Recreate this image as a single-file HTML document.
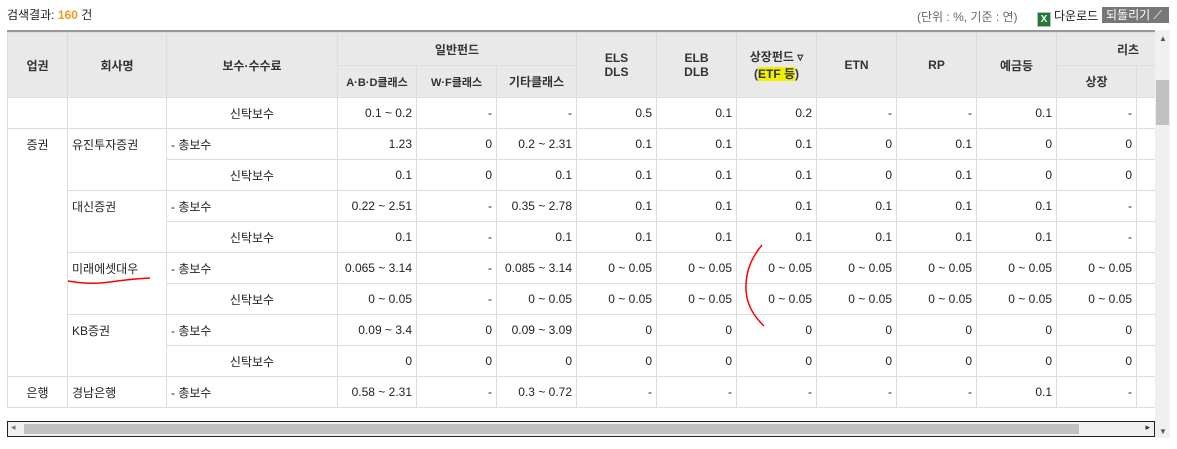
<!DOCTYPE html>
<html><head><meta charset="utf-8"><style>
body{margin:0;width:1177px;height:449px;background:#fff;font-family:"Liberation Sans","Noto Sans CJK KR",sans-serif;font-size:12px;color:#222;position:relative;overflow:hidden}
.top{position:absolute;left:7px;top:6px;font-size:12px}
.top b{color:#f39a1e;font-weight:bold}
.unit{position:absolute;left:917px;top:8px;color:#666;font-size:12px;white-space:nowrap}
.dl{position:absolute;left:1037px;top:7px;font-size:12px;white-space:nowrap}
.xl{display:inline-block;width:12px;height:13px;background:#1f7a3a;color:#fff;font-size:10px;font-weight:bold;text-align:center;line-height:13px;vertical-align:-2px;margin-right:3px;border:1px solid #bbb}
.btn{position:absolute;left:1102px;top:7px;width:67px;height:16px;background:#777;color:#fff;font-size:12px;line-height:16px;padding-left:4px;box-sizing:border-box;white-space:nowrap}
.wrap{position:absolute;left:7px;top:30px;width:1148px;height:377px;overflow:hidden;border-top:2px solid #999}
table{border-collapse:collapse;table-layout:fixed;width:1192px}
td,th{border:1px solid #ddd;height:30px;padding:0 4px;white-space:nowrap;overflow:hidden}
th{background:#e9e9e9;font-weight:bold;color:#333;font-size:12px}
td{text-align:right}
td.c{text-align:center}td.l{text-align:left}
.vs{position:absolute;left:1155px;top:30px;width:15px;height:408px;background:#f0f0f0}
.hs{position:absolute;left:7px;top:421px;width:1148px;height:16px;border:1px solid #222;background:#f0f0f0;box-sizing:border-box}
</style></head><body>
<div class="top">검색결과: <b>160</b> 건</div>
<div class="unit">(단위 : %, 기준 : 연)</div>
<div class="dl"><span class="xl">X</span>다운로드</div>
<div class="btn">되돌리기 ⟋</div>
<div class="wrap"><table>
<colgroup><col style="width:60px"><col style="width:99px"><col style="width:171px"><col style="width:79px"><col style="width:80px"><col style="width:80px"><col style="width:80px"><col style="width:80px"><col style="width:80px"><col style="width:80px"><col style="width:80px"><col style="width:80px"><col style="width:80px"><col style="width:63px"></colgroup>
<tr><th rowspan="2" style="height:64px">업권</th><th rowspan="2">회사명</th><th rowspan="2">보수·수수료</th><th colspan="3" style="height:31px">일반펀드</th><th rowspan="2">ELS<br>DLS</th><th rowspan="2">ELB<br>DLB</th><th rowspan="2">상장펀드 ▿<br>(<span style="background:#f0f000">ETF 등</span>)</th><th rowspan="2">ETN</th><th rowspan="2">RP</th><th rowspan="2">예금등</th><th colspan="2" style="text-align:left;padding-left:60px">리츠</th></tr>
<tr><th style="font-size:11px;padding:0">A·B·D클래스</th><th style="font-size:11px;padding:0">W·F클래스</th><th>기타클래스</th><th>상장</th><th></th></tr>
<tr><td></td><td></td><td class="c">신탁보수</td><td>0.1 ~ 0.2</td><td>-</td><td>-</td><td>0.5</td><td>0.1</td><td>0.2</td><td>-</td><td>-</td><td>0.1</td><td>-</td><td></td></tr>
<tr><td class="c" rowspan="8" style="vertical-align:top;padding-top:7px">증권</td><td class="l" rowspan="2" style="vertical-align:top;padding-top:7px">유진투자증권</td><td class="l">- 총보수</td><td>1.23</td><td>0</td><td>0.2 ~ 2.31</td><td>0.1</td><td>0.1</td><td>0.1</td><td>0</td><td>0.1</td><td>0</td><td>0</td><td></td></tr>
<tr><td class="c">신탁보수</td><td>0.1</td><td>0</td><td>0.1</td><td>0.1</td><td>0.1</td><td>0.1</td><td>0</td><td>0.1</td><td>0</td><td>0</td><td></td></tr>
<tr><td class="l" rowspan="2" style="vertical-align:top;padding-top:7px">대신증권</td><td class="l">- 총보수</td><td>0.22 ~ 2.51</td><td>-</td><td>0.35 ~ 2.78</td><td>0.1</td><td>0.1</td><td>0.1</td><td>0.1</td><td>0.1</td><td>0.1</td><td>-</td><td></td></tr>
<tr><td class="c">신탁보수</td><td>0.1</td><td>-</td><td>0.1</td><td>0.1</td><td>0.1</td><td>0.1</td><td>0.1</td><td>0.1</td><td>0.1</td><td>-</td><td></td></tr>
<tr><td class="l" rowspan="2" style="vertical-align:top;padding-top:7px">미래에셋대우</td><td class="l">- 총보수</td><td>0.065 ~ 3.14</td><td>-</td><td>0.085 ~ 3.14</td><td>0 ~ 0.05</td><td>0 ~ 0.05</td><td>0 ~ 0.05</td><td>0 ~ 0.05</td><td>0 ~ 0.05</td><td>0 ~ 0.05</td><td>0 ~ 0.05</td><td></td></tr>
<tr><td class="c">신탁보수</td><td>0 ~ 0.05</td><td>-</td><td>0 ~ 0.05</td><td>0 ~ 0.05</td><td>0 ~ 0.05</td><td>0 ~ 0.05</td><td>0 ~ 0.05</td><td>0 ~ 0.05</td><td>0 ~ 0.05</td><td>0 ~ 0.05</td><td></td></tr>
<tr><td class="l" rowspan="2" style="vertical-align:top;padding-top:7px">KB증권</td><td class="l">- 총보수</td><td>0.09 ~ 3.4</td><td>0</td><td>0.09 ~ 3.09</td><td>0</td><td>0</td><td>0</td><td>0</td><td>0</td><td>0</td><td>0</td><td></td></tr>
<tr><td class="c">신탁보수</td><td>0</td><td>0</td><td>0</td><td>0</td><td>0</td><td>0</td><td>0</td><td>0</td><td>0</td><td>0</td><td></td></tr>
<tr><td class="c">은행</td><td class="l">경남은행</td><td class="l">- 총보수</td><td>0.58 ~ 2.31</td><td>-</td><td>0.3 ~ 0.72</td><td>-</td><td>-</td><td>-</td><td>-</td><td>-</td><td>0.1</td><td>-</td><td></td></tr>
</table></div>
<div class="vs"><div style="position:absolute;top:4px;left:4px;font-size:8px;color:#555">▲</div><div style="position:absolute;top:50px;left:1px;width:13px;height:45px;background:#c1c1c1"></div><div style="position:absolute;bottom:2px;left:4px;font-size:8px;color:#555">▼</div></div>
<div class="hs"><div style="position:absolute;left:16px;top:2px;width:1055px;height:10px;background:#c1c1c1"></div><span style="position:absolute;left:3px;top:0;font-size:9px;color:#777">◂</span><span style="position:absolute;right:4px;top:0;font-size:9px;color:#333">▸</span></div>
<svg style="position:absolute;left:0;top:0" width="1177" height="449"><path d="M68 281 Q90 285 110 282 Q130 279 150 278" stroke="#f00" stroke-width="1.5" fill="none"/><path d="M762 245 Q745 265 746 290 Q747 310 764 326" stroke="#f00" stroke-width="1.5" fill="none"/></svg>
</body></html>
